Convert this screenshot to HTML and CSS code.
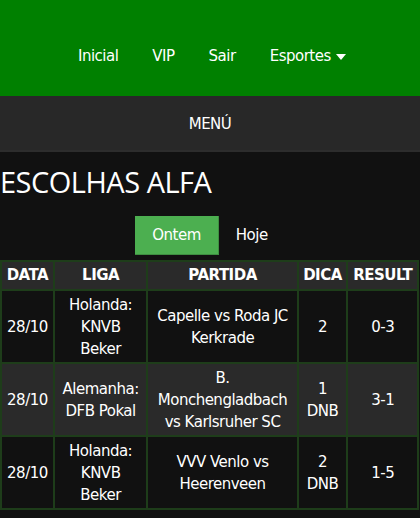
FILE: index.html
```html
<!DOCTYPE html>
<html lang="pt">
<head>
<meta charset="utf-8">
<title>Escolhas Alfa</title>
<link rel="stylesheet" href="styles.css">
</head>
<body>
<header class="topbar">
  <nav class="nav">
    <a class="nav-link" href="#">Inicial</a>
    <a class="nav-link" href="#">VIP</a>
    <a class="nav-link" href="#">Sair</a>
    <a class="nav-link dropdown" href="#">Esportes <span class="caret"></span></a>
  </nav>
</header>
<div class="menubar">MENÚ</div>
<main class="content">
  <h1 class="title">ESCOLHAS ALFA</h1>
  <div class="tabs">
    <a class="tab active" href="#">Ontem</a>
    <a class="tab" href="#">Hoje</a>
  </div>
  <table class="picks">
    <colgroup>
      <col class="c-data"><col class="c-liga"><col class="c-partida"><col class="c-dica"><col class="c-result">
    </colgroup>
    <thead>
      <tr><th>DATA</th><th>LIGA</th><th>PARTIDA</th><th>DICA</th><th>RESULT</th></tr>
    </thead>
    <tbody>
      <tr><td>28/10</td><td>Holanda: KNVB Beker</td><td>Capelle vs Roda JC Kerkrade</td><td>2</td><td>0-3</td></tr>
      <tr class="alt"><td>28/10</td><td>Alemanha: DFB Pokal</td><td>B. Monchengladbach vs Karlsruher SC</td><td>1 DNB</td><td>3-1</td></tr>
      <tr><td>28/10</td><td>Holanda: KNVB Beker</td><td>VVV Venlo vs Heerenveen</td><td>2 DNB</td><td>1-5</td></tr>
    </tbody>
  </table>
</main>
</body>
</html>
```
FILE: styles.css
```css
* { box-sizing: border-box; }
html, body { margin: 0; padding: 0; }
body {
  background: #111111;
  color: #ffffff;
  font-family: "DejaVu Sans", sans-serif;
  font-size: 15px;
  letter-spacing: -0.5px;
}
a { color: #ffffff; text-decoration: none; }

.topbar {
  background: #008000;
  height: 96px;
  display: flex;
  justify-content: center;
  align-items: center;
}
.nav { display: flex; align-items: center; padding-top: 16px; padding-left: 4px; }
.nav-link { padding: 0 17px; line-height: 22px; }
.caret {
  display: inline-block;
  width: 0; height: 0;
  border-left: 5px solid transparent;
  border-right: 5px solid transparent;
  border-top: 6px solid #ffffff;
  vertical-align: middle;
  margin-left: 1px;
}

.menubar {
  background: #282828;
  height: 56px;
  border-bottom: 2px solid #2d2d2d;
  display: flex;
  justify-content: center;
  align-items: center;
  padding-top: 2px;
}

.title {
  margin: 10px 0 0 0;
  font-family: "Open Sans", sans-serif;
  font-weight: 400;
  font-size: 29px;
  line-height: 40px;
  letter-spacing: -0.5px;
}

.tabs {
  display: flex;
  justify-content: center;
  margin-top: 14px;
}
.tab {
  padding: 0 17px;
  line-height: 38px;
  height: 39px;
}
.tab.active {
  background: #4caf50;
  border-right: 1px solid #3e8e41;
  border-bottom: 1px solid #3e8e41;
}

.picks {
  margin-top: 5px;
  width: 419px;
  border-collapse: collapse;
  text-align: center;
}
.c-data { width: 53px; }
.c-liga { width: 94px; }
.c-partida { width: 151px; }
.c-dica { width: 50px; }
.c-result { width: 71px; }
.picks th, .picks td {
  border: 2px solid #1e3d1a;
  padding: 3px 4px 2px;
  line-height: 22px;
}
.picks th {
  background: #2a2a2a;
  font-weight: 700;
  padding: 3px 2px;
  line-height: 21px;
}
.picks td { background: #111111; }
.picks tr.alt td { background: #2a2a2a; }
```
